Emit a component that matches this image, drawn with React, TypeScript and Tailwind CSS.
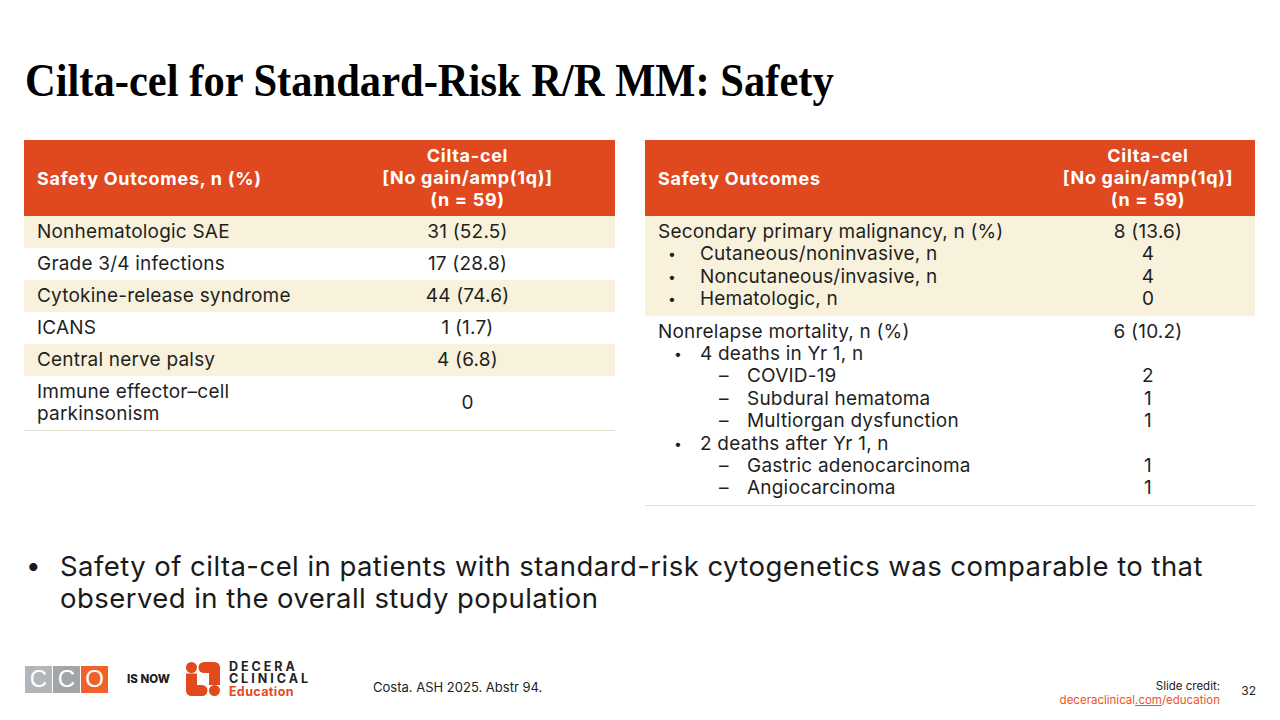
import React from "react";

const body = { fontFamily: "Inter, 'Noto Sans', sans-serif" };

type Row = { label: React.ReactNode; value: React.ReactNode; shade?: boolean };

const leftRows: Row[] = [
  { label: "Nonhematologic SAE", value: "31 (52.5)", shade: true },
  { label: "Grade 3/4 infections", value: "17 (28.8)" },
  { label: "Cytokine-release syndrome", value: "44 (74.6)", shade: true },
  { label: "ICANS", value: "1 (1.7)" },
  { label: "Central nerve palsy", value: "4 (6.8)", shade: true },
  {
    label: (
      <>
        Immune effector–cell
        <br />
        parkinsonism
      </>
    ),
    value: "0",
  },
];

function HeaderCell() {
  return (
    <th className="py-[5px] text-center text-[18px] font-bold leading-[22px] tracking-[0.7px]">
      Cilta-cel
      <br />
      [No gain/amp(1q)]
      <br />
      (n = 59)
    </th>
  );
}

function Bullet({ children, level = 1 }: { children: React.ReactNode; level?: 1 | 2 | 3 }) {
  if (level === 1) {
    return (
      <div className="flex pl-[10px]">
        <span className="w-[12px] shrink-0 text-[14px]">•</span>
        <span className="pl-[20px]">{children}</span>
      </div>
    );
  }
  if (level === 2) {
    return (
      <div className="flex pl-[16px]">
        <span className="w-[12px] shrink-0 text-[14px]">•</span>
        <span className="pl-[14px]">{children}</span>
      </div>
    );
  }
  return (
    <div className="flex pl-[61px]">
      <span className="w-[16px] shrink-0">–</span>
      <span className="pl-[12px]">{children}</span>
    </div>
  );
}

function LeftTable() {
  return (
    <table className="w-[591px] border-collapse text-[19px] tracking-[0.2px] text-[#1f1f1f]" style={body}>
      <thead>
        <tr className="bg-[#e0481f] text-white">
          <th className="w-[296px] py-[5px] pl-[13px] text-left text-[18px] font-bold tracking-[0.7px]">
            Safety Outcomes, n (%)
          </th>
          <HeaderCell />
        </tr>
      </thead>
      <tbody>
        {leftRows.map((row, i) => (
          <tr key={i} className={row.shade ? "bg-[#f8f2dc]" : "bg-white"}>
            <td className="py-[5px] pl-[13px] leading-[22px]">{row.label}</td>
            <td className="py-[5px] text-center leading-[22px]">{row.value}</td>
          </tr>
        ))}
        <tr>
          <td colSpan={2} className="h-px bg-[#e6e1cf] p-0" />
        </tr>
      </tbody>
    </table>
  );
}

function RightTable() {
  return (
    <table className="w-[610px] border-collapse text-[19px] tracking-[0.2px] text-[#1f1f1f]" style={body}>
      <thead>
        <tr className="bg-[#e0481f] text-white">
          <th className="w-[396px] py-[5px] pl-[13px] text-left text-[18px] font-bold tracking-[0.7px]">
            Safety Outcomes
          </th>
          <HeaderCell />
        </tr>
      </thead>
      <tbody>
        <tr className="bg-[#f8f2dc]">
          <td className="py-[5px] pl-[13px] leading-[22.4px]">
            <div>Secondary primary malignancy, n (%)</div>
            <Bullet>Cutaneous/noninvasive, n</Bullet>
            <Bullet>Noncutaneous/invasive, n</Bullet>
            <Bullet>Hematologic, n</Bullet>
          </td>
          <td className="py-[5px] text-center align-top leading-[22.4px]">
            <div>8 (13.6)</div>
            <div>4</div>
            <div>4</div>
            <div>0</div>
          </td>
        </tr>
        <tr className="bg-white">
          <td className="py-[5px] pl-[13px] leading-[22.4px]">
            <div>Nonrelapse mortality, n (%)</div>
            <Bullet level={2}>4 deaths in Yr 1, n</Bullet>
            <Bullet level={3}>COVID-19</Bullet>
            <Bullet level={3}>Subdural hematoma</Bullet>
            <Bullet level={3}>Multiorgan dysfunction</Bullet>
            <Bullet level={2}>2 deaths after Yr 1, n</Bullet>
            <Bullet level={3}>Gastric adenocarcinoma</Bullet>
            <Bullet level={3}>Angiocarcinoma</Bullet>
          </td>
          <td className="py-[5px] text-center align-top leading-[22.4px]">
            <div>6 (10.2)</div>
            <div>&nbsp;</div>
            <div>2</div>
            <div>1</div>
            <div>1</div>
            <div>&nbsp;</div>
            <div>1</div>
            <div>1</div>
          </td>
        </tr>
        <tr>
          <td colSpan={2} className="h-px bg-[#e6e1cf] p-0" />
        </tr>
      </tbody>
    </table>
  );
}

function CcoLogo() {
  return (
    <div className="flex h-[27px]" style={{ fontFamily: "'Liberation Sans', sans-serif" }}>
      <div className="flex w-[27px] items-center justify-center bg-[#b3b6b8] text-[24px] text-white">C</div>
      <div className="ml-px flex w-[27px] items-center justify-center bg-[#a2a6a9] text-[24px] text-white">C</div>
      <div className="ml-px flex w-[27px] items-center justify-center bg-[#f0622a] text-[24px] text-white">O</div>
    </div>
  );
}

function DeceraMark() {
  return (
    <svg width="34" height="34" viewBox="0 0 34 34" fill="#e2491b">
      <circle cx="5.5" cy="5.5" r="5.5" />
      <rect x="12.5" y="0" width="21.5" height="11" rx="5.5" />
      <rect x="23" y="5" width="11" height="18" />
      <rect x="0" y="11.5" width="11" height="17" />
      <rect x="0" y="23" width="21.5" height="11" rx="5.5" />
      <circle cx="28.5" cy="28.5" r="5.5" />
    </svg>
  );
}

export default function App() {
  return (
    <div className="relative h-[720px] w-[1280px] overflow-hidden bg-white">
      <h1
        className="pl-[25px] pt-[53px] text-[46px] font-bold leading-[56px] text-black"
        style={{ fontFamily: "'Liberation Serif', serif" }}>
        <span className="inline-block origin-left scale-x-[0.925] whitespace-nowrap">
          Cilta-cel for Standard-Risk R/R MM: Safety
        </span>
      </h1>

      <div className="mt-[31px] flex items-start gap-[30px] pl-[24px]">
        <LeftTable />
        <RightTable />
      </div>

      <div
        className="absolute left-[24px] top-[550px] flex text-[27.5px] leading-[32px] tracking-[0.45px] text-[#1a1a1a]"
        style={body}>
        <span className="w-[36px] shrink-0 pl-[2px] text-[26px]">•</span>
        <span className="w-[1200px]">
          Safety of cilta-cel in patients with standard-risk cytogenetics was comparable to that
          <br />
          observed in the overall study population
        </span>
      </div>

      <div className="absolute bottom-[22px] left-[25px] flex items-center" style={body}>
        <CcoLogo />
        <span className="ml-[19px] text-[11.5px] font-extrabold text-[#222]">IS NOW</span>
        <span className="ml-[16px]">
          <DeceraMark />
        </span>
        <div className="ml-[9px] flex flex-col text-[12.5px] font-bold leading-[12.5px] tracking-[3px]">
          <span className="text-[#222]">DECERA</span>
          <span className="text-[#222]">CLINICAL</span>
          <span className="tracking-[0.4px] text-[#e2491b]">Education</span>
        </div>
        <span className="ml-[62px] mt-[17px] text-[13px] text-[#222]">Costa. ASH 2025. Abstr 94.</span>
      </div>

      <div className="absolute bottom-[13px] right-[60px] text-right text-[11.5px] leading-[14px]" style={body}>
        <div className="text-[#222]">Slide credit:</div>
        <div className="text-[#e8562a]">
          deceraclinical<span className="underline">.com</span>/education
        </div>
      </div>
      <div className="absolute bottom-[20px] right-[24px] text-[12px] text-[#222]" style={body}>
        32
      </div>
    </div>
  );
}
